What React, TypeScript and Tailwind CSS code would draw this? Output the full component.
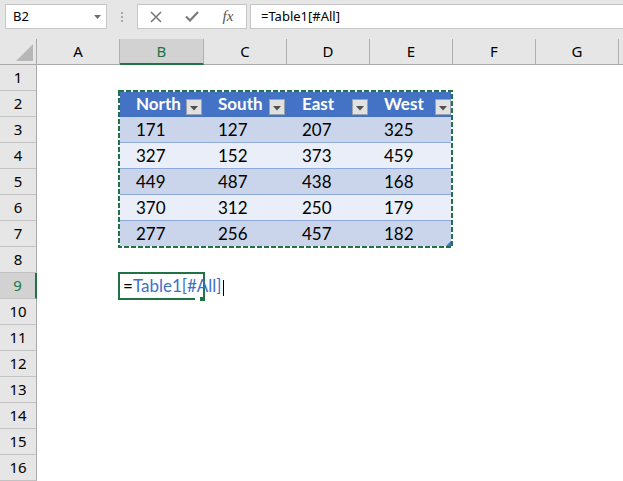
const columns = [
  { label: "A", w: "w-[83px]" },
  { label: "B", w: "w-[84px]" },
  { label: "C", w: "w-[83px]" },
  { label: "D", w: "w-[83px]" },
  { label: "E", w: "w-[83px]" },
  { label: "F", w: "w-[83px]" },
  { label: "G", w: "w-[83px]" },
];

const tableCols = [
  { name: "North", w: "w-[84px]", pl: "pl-[17px]" },
  { name: "South", w: "w-[83px]", pl: "pl-[15px]" },
  { name: "East", w: "w-[83px]", pl: "pl-[16px]" },
  { name: "West", w: "w-[83px]", pl: "pl-[15px]" },
];

const data = [
  [171, 127, 207, 325],
  [327, 152, 373, 459],
  [449, 487, 438, 168],
  [370, 312, 250, 179],
  [277, 256, 457, 182],
];

function FilterButton() {
  return (
    <div className="mt-[5px] flex h-[16px] w-[16px] items-center justify-center border border-[#9aa3b0] bg-[#e1e1e1]">
      <svg width="8" height="5" viewBox="0 0 8 5" className="mt-[3px]">
        <path d="M0 0h8L4 4.5z" fill="#4f4f4f" />
      </svg>
    </div>
  );
}

function FormulaBar() {
  return (
    <div className="flex h-[39px] items-start bg-[#e6e6e6] pt-[4px] font-[family-name:'Noto_Sans',sans-serif] text-[13px] text-black">
      <div className="ml-[5px] flex h-[25px] w-[102px] items-center justify-between border border-[#c6c6c6] bg-white pl-[7px] pr-[5px]">
        <span>B2</span>
        <svg width="7" height="4" viewBox="0 0 7 4">
          <path d="M0 0h7L3.5 4z" fill="#6e6e6e" />
        </svg>
      </div>
      <div className="ml-[14px] mt-[8px] flex w-[2px] flex-col gap-[2px]">
        <div className="h-[2px] w-[2px] bg-[#a9a9a9]" />
        <div className="h-[2px] w-[2px] bg-[#a9a9a9]" />
        <div className="h-[2px] w-[2px] bg-[#a9a9a9]" />
      </div>
      <div className="ml-[14px] flex h-[25px] w-[110px] items-center border border-[#c6c6c6] bg-white">
        <div className="flex w-[36px] justify-center">
          <svg width="12" height="12" viewBox="0 0 12 12">
            <path d="M1 1l10 10M11 1L1 11" stroke="#7a7a7a" strokeWidth="1.6" />
          </svg>
        </div>
        <div className="flex w-[36px] justify-center">
          <svg width="14" height="11" viewBox="0 0 14 11">
            <path d="M1 5.5l4 4L13 1" stroke="#7a7a7a" strokeWidth="2.2" fill="none" />
          </svg>
        </div>
        <div className="flex w-[36px] justify-center font-[family-name:'Liberation_Serif',serif] text-[15px] italic text-[#555]">
          fx
        </div>
      </div>
      <div className="ml-[3px] flex h-[25px] flex-1 items-center border border-r-0 border-[#c6c6c6] bg-white pl-[10px]">
        =Table1[#All]
      </div>
    </div>
  );
}

function ColumnHeader() {
  return (
    <div className="flex h-[26px] bg-[#e6e6e6] font-[family-name:'Noto_Sans',sans-serif] text-[15px]">
      <div className="flex w-[37px] items-end justify-end border-r border-b border-[#a9a9a9] pb-[3px] pr-[3px]">
        <svg width="17" height="17" viewBox="0 0 17 17">
          <path d="M17 0v17H0z" fill="#b7b7b7" />
        </svg>
      </div>
      {columns.map((c) =>
        c.label === "B" ? (
          <div
            key={c.label}
            className={`${c.w} flex items-center justify-center border-r border-r-[#b0b0b0] border-b-2 border-b-[#217346] bg-[#d2d2d2] pt-[1px] text-[#217346]`}
          >
            {c.label}
          </div>
        ) : (
          <div
            key={c.label}
            className={`${c.w} flex items-center justify-center border-r border-b border-r-[#b0b0b0] border-b-[#a9a9a9] text-black`}
          >
            {c.label}
          </div>
        )
      )}
      <div className="flex-1 border-b border-[#a9a9a9]" />
    </div>
  );
}

function RowHeaders() {
  return (
    <div className="flex w-[37px] flex-col bg-[#e6e6e6] font-[family-name:'Noto_Sans',sans-serif] text-[15px]">
      {Array.from({ length: 16 }, (_, i) => i + 1).map((n) =>
        n === 9 ? (
          <div
            key={n}
            className="flex h-[26px] items-center justify-center border-b border-b-[#c2c2c2] border-r-2 border-r-[#217346] bg-[#d2d2d2] text-[#217346]"
          >
            {n}
          </div>
        ) : (
          <div
            key={n}
            className="flex h-[26px] items-center justify-center border-b border-r border-b-[#c2c2c2] border-r-[#a9a9a9] text-black"
          >
            {n}
          </div>
        )
      )}
    </div>
  );
}

function DataTable() {
  return (
    <div className="relative w-[333px] font-[family-name:Lato,sans-serif] text-[17px]">
      <div className="flex h-[26px] bg-[#4472c4] font-bold text-white">
        {tableCols.map((c) => (
          <div key={c.name} className={`${c.w} ${c.pl} flex items-center justify-between pr-[1px]`}>
            <span>{c.name}</span>
            <FilterButton />
          </div>
        ))}
      </div>
      {data.map((row, ri) => (
        <div
          key={ri}
          className={`flex h-[26px] text-black ${ri % 2 === 0 ? "bg-[#cad5ec]" : "bg-[#e9eef8]"} ${
            ri < data.length - 1 ? "border-b border-[#8eaadb]" : ""
          }`}
        >
          {row.map((v, ci) => (
            <div key={ci} className={`${tableCols[ci].w} ${tableCols[ci].pl} flex items-center`}>
              {v}
            </div>
          ))}
        </div>
      ))}
      {/* copy marquee */}
      <svg
        width="335"
        height="158"
        viewBox="0 0 335 158"
        className="pointer-events-none absolute -left-px -top-px"
      >
        <path d="M334 150v7h-7z" fill="#4472c4" />
        <rect x="1" y="1" width="333" height="156" fill="none" stroke="#ffffff" strokeWidth="2" />
        <rect
          x="1"
          y="1"
          width="333"
          height="156"
          fill="none"
          stroke="#217346"
          strokeWidth="2"
          strokeDasharray="5 2"
        />
      </svg>
    </div>
  );
}

function EditingCell() {
  return (
    <div className="relative flex h-[28px] w-[87px] items-center border-2 border-[#217346] pl-[3px] font-[family-name:Lato,sans-serif] text-[17px]">
      <span className="whitespace-nowrap">
        <span className="text-black">=</span>
        <span className="text-[#3f6fca]">Table1[#All]</span>
      </span>
      <span className="ml-[1px] inline-block h-[16px] w-[1px] shrink-0 translate-y-[2px] bg-black" />
      <div className="absolute right-[-2px] bottom-[-3px] h-[4px] w-[10px] border-l-[5px] border-white bg-[#217346]" />
    </div>
  );
}

export default function App() {
  return (
    <div className="h-[481px] w-[623px] overflow-hidden bg-white">
      <FormulaBar />
      <ColumnHeader />
      <div className="flex">
        <RowHeaders />
        <div className="flex flex-1 flex-col">
          <div className="h-[26px]" />
          <div className="flex h-[156px]">
            <div className="w-[82px]" />
            <DataTable />
          </div>
          <div className="h-[26px]" />
          <div className="flex h-[26px] items-center">
            <div className="w-[81px] shrink-0" />
            <EditingCell />
          </div>
        </div>
      </div>
    </div>
  );
}
